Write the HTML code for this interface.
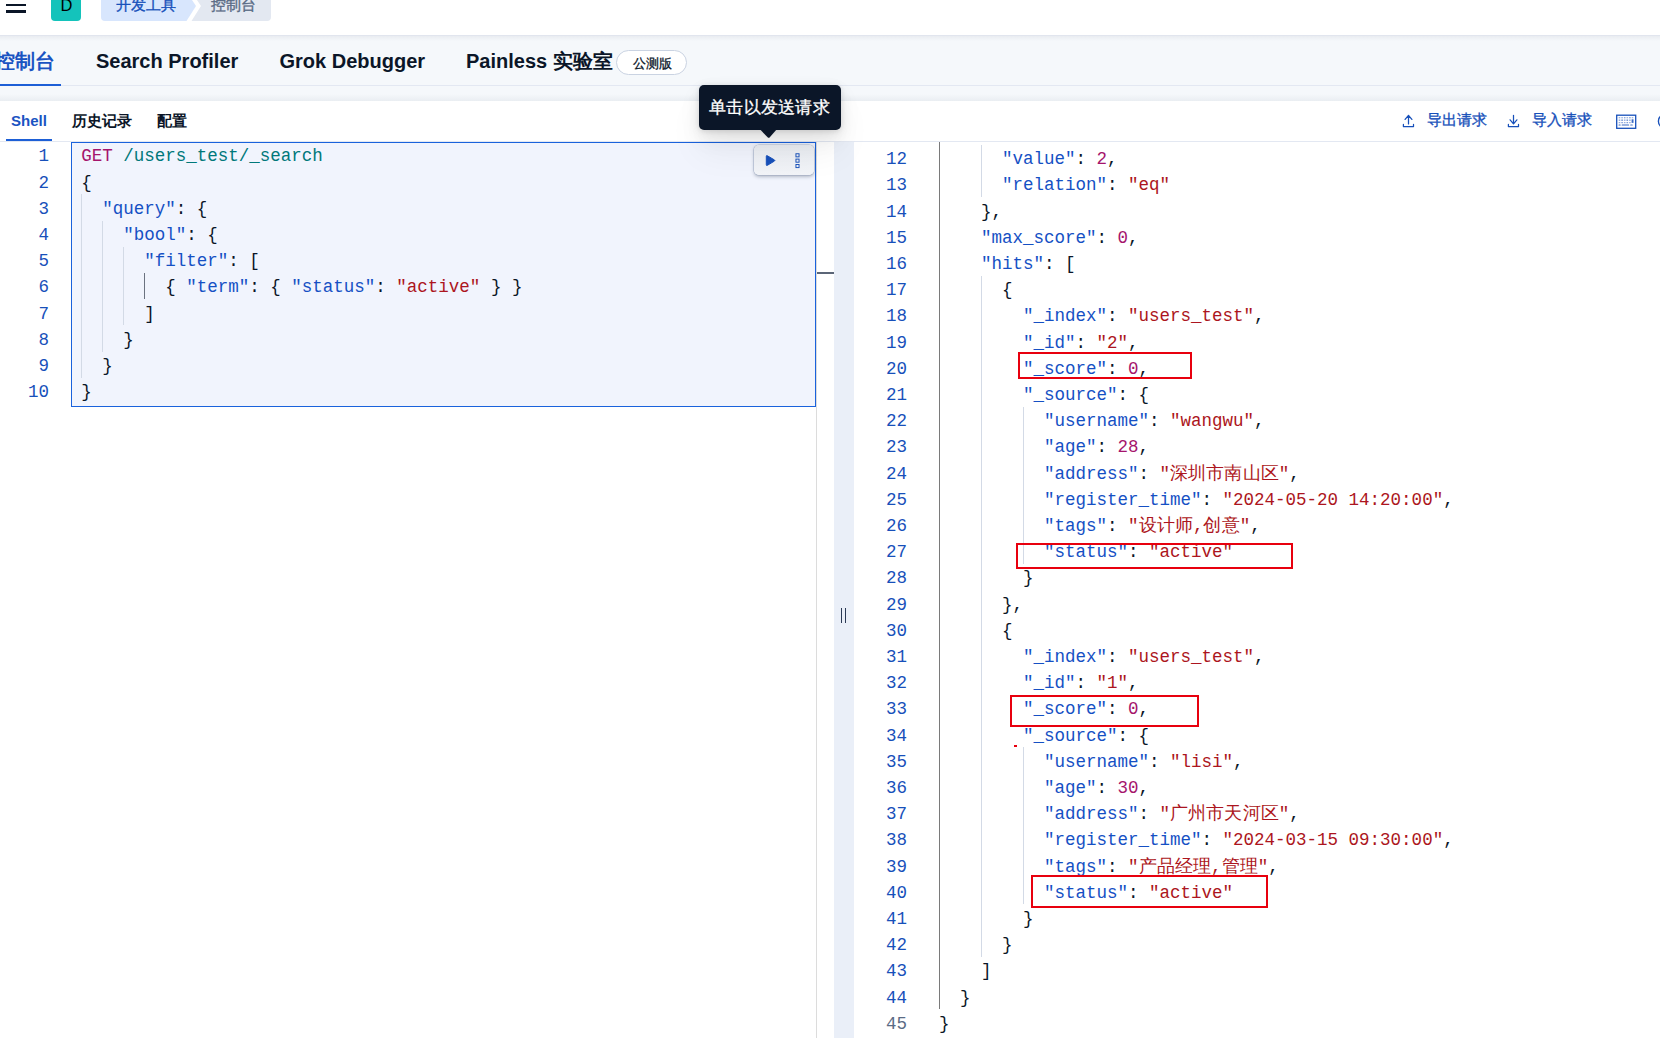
<!DOCTYPE html>
<html><head><meta charset="utf-8">
<style>
html,body{margin:0;padding:0;}
body{width:1660px;height:1038px;overflow:hidden;position:relative;background:#fff;font-family:"Liberation Sans",sans-serif;color:#0B1628;}
.abs{position:absolute;}
.ln{position:absolute;font-family:"Liberation Mono",monospace;font-size:17.5px;line-height:26.25px;height:26.25px;text-align:right;color:#1750BA;white-space:pre;}
.cl{position:absolute;font-family:"Liberation Mono",monospace;font-size:17.5px;line-height:26.25px;height:26.25px;white-space:pre;}
i.cj{font-style:normal;letter-spacing:0.1px;}
.t{position:absolute;white-space:nowrap;line-height:1;}
</style></head>
<body>
<!-- header -->
<div class="abs" style="left:0;top:0;width:1660px;height:35px;background:#fff;"></div>
<div class="abs" style="left:0;top:35px;width:1660px;height:66px;background:#F5F8FB;"></div>
<div class="abs" style="left:0;top:35px;width:1660px;height:1px;background:#E1E5EE;"></div>
<div class="abs" style="left:0;top:36px;width:1660px;height:5px;background:linear-gradient(#E9ECF1,#F5F8FB);"></div>
<!-- hamburger -->
<div class="abs" style="left:6px;top:3.6px;width:20px;height:2.6px;background:#0B1628;"></div>
<div class="abs" style="left:6px;top:10.2px;width:20px;height:2.6px;background:#0B1628;"></div>
<!-- D badge -->
<div class="abs" style="left:51px;top:-10px;width:30px;height:31px;background:#14C3BB;border-radius:4px;"></div>
<div class="t" style="left:60.5px;top:-3px;font-size:16.5px;color:#000;">D</div>
<!-- breadcrumbs -->
<svg class="abs" style="left:0;top:0" width="300" height="35">
  <path d="M101,-9 L186,-9 L196,6 L186.5,21 L105,21 Q101,21 101,17 Z" fill="#D8E6FD"/>
  <path d="M191,-9 L267,-9 Q271,-9 271,-5 L271,17 Q271,21 267,21 L191.5,21 L201,6 Z" fill="#E3E8F1"/>
</svg>
<div class="t" style="left:116px;top:-3px;font-size:15px;color:#1750BA;-webkit-text-stroke:0.35px #1750BA;">开发工具</div>
<div class="t" style="left:211px;top:-3px;font-size:15px;color:#5A6B85;-webkit-text-stroke:0.35px #5A6B85;">控制台</div>

<!-- big tabs -->
<div class="t" style="left:-5px;top:51px;font-size:20px;font-weight:bold;color:#1A54C2;">控制台</div>
<div class="t" style="left:96px;top:50.5px;font-size:20px;font-weight:bold;">Search Profiler</div>
<div class="t" style="left:279.5px;top:50.5px;font-size:20px;font-weight:bold;">Grok Debugger</div>
<div class="t" style="left:466px;top:50.5px;font-size:20px;font-weight:bold;">Painless 实验室</div>
<div class="abs" style="left:616px;top:50px;width:71px;height:25px;box-sizing:border-box;border:1px solid #CAD3E2;border-radius:13px;background:#fff;"></div>
<div class="t" style="left:632.5px;top:57.5px;font-size:12.5px;-webkit-text-stroke:0.3px #0B1628;">公测版</div>
<div class="abs" style="left:0;top:85px;width:1660px;height:1px;background:#E3E8F2;"></div>
<div class="abs" style="left:0;top:83.5px;width:61px;height:2.5px;background:#1D5FD6;"></div>
<div class="abs" style="left:0;top:94px;width:1660px;height:7px;background:linear-gradient(#F5F8FB,#EAEEF2);"></div>

<!-- small tabs -->
<div class="t" style="left:11px;top:113px;font-size:15px;font-weight:bold;color:#1A54C2;">Shell</div>
<div class="t" style="left:71.5px;top:112.5px;font-size:15px;font-weight:bold;">历史记录</div>
<div class="t" style="left:156.5px;top:112.5px;font-size:15px;font-weight:bold;">配置</div>
<div class="abs" style="left:0;top:141px;width:1660px;height:1px;background:#E3E8F2;"></div>
<div class="abs" style="left:6px;top:138.7px;width:46px;height:2.4px;background:#1D5FD6;"></div>

<!-- right actions -->
<svg class="abs" style="left:1395px;top:108px" width="30" height="25" fill="none" stroke="#1750BA" stroke-width="1.25" stroke-linecap="round" stroke-linejoin="round">
  <path d="M13.5,7.5 L13.5,15.9 M10.1,11.4 L13.5,7.3 L16.9,11.4 M8.4,16.4 L8.4,18.5 L18.5,18.5 L18.5,16.4"/>
</svg>
<div class="t" style="left:1426.5px;top:113.3px;font-size:14.6px;color:#1750BA;-webkit-text-stroke:0.35px #1750BA;">导出请求</div>
<svg class="abs" style="left:1500px;top:108px" width="30" height="25" fill="none" stroke="#1750BA" stroke-width="1.25" stroke-linecap="round" stroke-linejoin="round">
  <path d="M13.5,7.3 L13.5,15.7 M10.1,11.8 L13.5,15.9 L16.9,11.8 M8.4,16.4 L8.4,18.5 L18.5,18.5 L18.5,16.4"/>
</svg>
<div class="t" style="left:1531.5px;top:113.3px;font-size:14.6px;color:#1750BA;-webkit-text-stroke:0.35px #1750BA;">导入请求</div>
<svg class="abs" style="left:1610px;top:108px" width="50" height="25">
  <rect x="6.7" y="7.2" width="19" height="13.1" fill="none" stroke="#1750BA" stroke-width="1.3"/>
  <g fill="#1750BA">
    <rect x="8.7" y="9.2" width="1.6" height="1.1" opacity=".5"/><rect x="11.3" y="9.2" width="1.6" height="1.1" opacity=".5"/><rect x="13.9" y="9.2" width="1.6" height="1.1" opacity=".6"/><rect x="16.5" y="9.2" width="1.6" height="1.1" opacity=".5"/><rect x="19.1" y="9.2" width="1.6" height="1.1" opacity=".6"/><rect x="21.7" y="9.2" width="1.6" height="1.1" opacity=".5"/>
    <rect x="8.7" y="11.6" width="1.6" height="1.1" opacity=".6"/><rect x="11.3" y="11.6" width="1.6" height="1.1" opacity=".8"/><rect x="13.9" y="11.6" width="1.6" height="1.1" opacity=".6"/><rect x="16.5" y="11.6" width="1.6" height="1.1" opacity=".8"/><rect x="19.1" y="11.6" width="1.6" height="1.1" opacity=".6"/>
    <rect x="21.6" y="11.3" width="1.9" height="3.6" opacity=".85"/>
    <rect x="8.7" y="14.1" width="1.6" height="1.1" opacity=".5"/><rect x="11.3" y="14.1" width="1.6" height="1.1" opacity=".6"/><rect x="13.9" y="14.1" width="1.6" height="1.1" opacity=".5"/><rect x="16.5" y="14.1" width="1.6" height="1.1" opacity=".6"/><rect x="19.1" y="14.1" width="1.6" height="1.1" opacity=".5"/>
    <rect x="8.5" y="16.4" width="2.2" height="1.2" rx=".5" opacity=".85"/><rect x="11.6" y="16.4" width="7.6" height="1.2" rx=".5" opacity=".85"/><rect x="20.2" y="16.4" width="2.6" height="1.2" rx=".5" opacity=".8"/>
  </g>
  <path d="M53.6,7.1 A6.3,6.3 0 0 0 53.6,19.5" fill="none" stroke="#1750BA" stroke-width="1.4"/>
</svg>

<!-- left editor -->
<div class="abs" style="left:71px;top:142px;width:745px;height:265px;box-sizing:border-box;border:1.25px solid #1A62DC;background:#F1F4FD;"></div>
<!-- scrollbar border -->
<div class="abs" style="left:816.2px;top:142px;width:1px;height:896px;background:#DCDCDC;"></div>
<div class="abs" style="left:817px;top:272px;width:17px;height:1.8px;background:#5B6577;"></div>
<!-- resizer -->
<div class="abs" style="left:834px;top:142px;width:20px;height:896px;background:#EAEFF8;"></div>
<div class="abs" style="left:840.5px;top:608px;width:1.3px;height:15px;background:#2B3A55;"></div>
<div class="abs" style="left:845px;top:608px;width:1.3px;height:15px;background:#2B3A55;"></div>

<div style="position:absolute;left:81.00px;top:194.40px;width:1.10px;height:183.40px;background:#D3DAE6"></div>
<div style="position:absolute;left:102.00px;top:220.60px;width:1.10px;height:131.00px;background:#D3DAE6"></div>
<div style="position:absolute;left:123.20px;top:246.80px;width:1.10px;height:78.60px;background:#D3DAE6"></div>
<div style="position:absolute;left:144.00px;top:273.00px;width:1.30px;height:26.20px;background:#6B7280"></div>
<div style="position:absolute;left:938.70px;top:141.50px;width:1.30px;height:867.80px;background:#7A7A7A"></div>
<div style="position:absolute;left:981.00px;top:144.70px;width:1.10px;height:52.40px;background:#D3DAE6"></div>
<div style="position:absolute;left:981.00px;top:275.70px;width:1.10px;height:681.20px;background:#D3DAE6"></div>
<div style="position:absolute;left:1023.30px;top:406.70px;width:1.10px;height:157.20px;background:#D3DAE6"></div>
<div style="position:absolute;left:1023.30px;top:747.30px;width:1.10px;height:157.20px;background:#D3DAE6"></div>
<div class="ln" style="top:143.30px;left:0;width:49px">1</div>
<div class="cl" style="top:143.30px;left:81.20px"><span style="color:#A5146C">GET</span> <span style="color:#00787A">/users_test/_search</span></div>
<div class="ln" style="top:169.50px;left:0;width:49px">2</div>
<div class="cl" style="top:169.50px;left:81.20px"><span style="color:#0B1628">{</span></div>
<div class="ln" style="top:195.70px;left:0;width:49px">3</div>
<div class="cl" style="top:195.70px;left:81.20px">  <span style="color:#1550C4">&quot;query&quot;</span><span style="color:#0B1628">:</span> <span style="color:#0B1628">{</span></div>
<div class="ln" style="top:221.90px;left:0;width:49px">4</div>
<div class="cl" style="top:221.90px;left:81.20px">    <span style="color:#1550C4">&quot;bool&quot;</span><span style="color:#0B1628">:</span> <span style="color:#0B1628">{</span></div>
<div class="ln" style="top:248.10px;left:0;width:49px">5</div>
<div class="cl" style="top:248.10px;left:81.20px">      <span style="color:#1550C4">&quot;filter&quot;</span><span style="color:#0B1628">:</span> <span style="color:#0B1628">[</span></div>
<div class="ln" style="top:274.30px;left:0;width:49px">6</div>
<div class="cl" style="top:274.30px;left:81.20px">        <span style="color:#0B1628">{</span> <span style="color:#1550C4">&quot;term&quot;</span><span style="color:#0B1628">:</span> <span style="color:#0B1628">{</span> <span style="color:#1550C4">&quot;status&quot;</span><span style="color:#0B1628">:</span> <span style="color:#AC1520">&quot;active&quot;</span> <span style="color:#0B1628">}</span> <span style="color:#0B1628">}</span></div>
<div class="ln" style="top:300.50px;left:0;width:49px">7</div>
<div class="cl" style="top:300.50px;left:81.20px">      <span style="color:#0B1628">]</span></div>
<div class="ln" style="top:326.70px;left:0;width:49px">8</div>
<div class="cl" style="top:326.70px;left:81.20px">    <span style="color:#0B1628">}</span></div>
<div class="ln" style="top:352.90px;left:0;width:49px">9</div>
<div class="cl" style="top:352.90px;left:81.20px">  <span style="color:#0B1628">}</span></div>
<div class="ln" style="top:379.10px;left:0;width:49px">10</div>
<div class="cl" style="top:379.10px;left:81.20px"><span style="color:#0B1628">}</span></div>
<div class="ln" style="top:146.10px;left:854px;width:53px;color:#1750BA">12</div>
<div class="cl" style="top:146.10px;left:939.00px">      <span style="color:#1550C4">&quot;value&quot;</span><span style="color:#0B1628">:</span> <span style="color:#A5146C">2</span><span style="color:#0B1628">,</span></div>
<div class="ln" style="top:172.30px;left:854px;width:53px;color:#1750BA">13</div>
<div class="cl" style="top:172.30px;left:939.00px">      <span style="color:#1550C4">&quot;relation&quot;</span><span style="color:#0B1628">:</span> <span style="color:#AC1520">&quot;eq&quot;</span></div>
<div class="ln" style="top:198.50px;left:854px;width:53px;color:#1750BA">14</div>
<div class="cl" style="top:198.50px;left:939.00px">    <span style="color:#0B1628">}</span><span style="color:#0B1628">,</span></div>
<div class="ln" style="top:224.70px;left:854px;width:53px;color:#1750BA">15</div>
<div class="cl" style="top:224.70px;left:939.00px">    <span style="color:#1550C4">&quot;max_score&quot;</span><span style="color:#0B1628">:</span> <span style="color:#A5146C">0</span><span style="color:#0B1628">,</span></div>
<div class="ln" style="top:250.90px;left:854px;width:53px;color:#1750BA">16</div>
<div class="cl" style="top:250.90px;left:939.00px">    <span style="color:#1550C4">&quot;hits&quot;</span><span style="color:#0B1628">:</span> <span style="color:#0B1628">[</span></div>
<div class="ln" style="top:277.10px;left:854px;width:53px;color:#1750BA">17</div>
<div class="cl" style="top:277.10px;left:939.00px">      <span style="color:#0B1628">{</span></div>
<div class="ln" style="top:303.30px;left:854px;width:53px;color:#1750BA">18</div>
<div class="cl" style="top:303.30px;left:939.00px">        <span style="color:#1550C4">&quot;_index&quot;</span><span style="color:#0B1628">:</span> <span style="color:#AC1520">&quot;users_test&quot;</span><span style="color:#0B1628">,</span></div>
<div class="ln" style="top:329.50px;left:854px;width:53px;color:#1750BA">19</div>
<div class="cl" style="top:329.50px;left:939.00px">        <span style="color:#1550C4">&quot;_id&quot;</span><span style="color:#0B1628">:</span> <span style="color:#AC1520">&quot;2&quot;</span><span style="color:#0B1628">,</span></div>
<div class="ln" style="top:355.70px;left:854px;width:53px;color:#1750BA">20</div>
<div class="cl" style="top:355.70px;left:939.00px">        <span style="color:#1550C4">&quot;_score&quot;</span><span style="color:#0B1628">:</span> <span style="color:#A5146C">0</span><span style="color:#0B1628">,</span></div>
<div class="ln" style="top:381.90px;left:854px;width:53px;color:#1750BA">21</div>
<div class="cl" style="top:381.90px;left:939.00px">        <span style="color:#1550C4">&quot;_source&quot;</span><span style="color:#0B1628">:</span> <span style="color:#0B1628">{</span></div>
<div class="ln" style="top:408.10px;left:854px;width:53px;color:#1750BA">22</div>
<div class="cl" style="top:408.10px;left:939.00px">          <span style="color:#1550C4">&quot;username&quot;</span><span style="color:#0B1628">:</span> <span style="color:#AC1520">&quot;wangwu&quot;</span><span style="color:#0B1628">,</span></div>
<div class="ln" style="top:434.30px;left:854px;width:53px;color:#1750BA">23</div>
<div class="cl" style="top:434.30px;left:939.00px">          <span style="color:#1550C4">&quot;age&quot;</span><span style="color:#0B1628">:</span> <span style="color:#A5146C">28</span><span style="color:#0B1628">,</span></div>
<div class="ln" style="top:460.50px;left:854px;width:53px;color:#1750BA">24</div>
<div class="cl" style="top:460.50px;left:939.00px">          <span style="color:#1550C4">&quot;address&quot;</span><span style="color:#0B1628">:</span> <span style="color:#AC1520">&quot;<i class="cj">深</i><i class="cj">圳</i><i class="cj">市</i><i class="cj">南</i><i class="cj">山</i><i class="cj">区</i>&quot;</span><span style="color:#0B1628">,</span></div>
<div class="ln" style="top:486.70px;left:854px;width:53px;color:#1750BA">25</div>
<div class="cl" style="top:486.70px;left:939.00px">          <span style="color:#1550C4">&quot;register_time&quot;</span><span style="color:#0B1628">:</span> <span style="color:#AC1520">&quot;2024-05-20 14:20:00&quot;</span><span style="color:#0B1628">,</span></div>
<div class="ln" style="top:512.90px;left:854px;width:53px;color:#1750BA">26</div>
<div class="cl" style="top:512.90px;left:939.00px">          <span style="color:#1550C4">&quot;tags&quot;</span><span style="color:#0B1628">:</span> <span style="color:#AC1520">&quot;<i class="cj">设</i><i class="cj">计</i><i class="cj">师</i>,<i class="cj">创</i><i class="cj">意</i>&quot;</span><span style="color:#0B1628">,</span></div>
<div class="ln" style="top:539.10px;left:854px;width:53px;color:#1750BA">27</div>
<div class="cl" style="top:539.10px;left:939.00px">          <span style="color:#1550C4">&quot;status&quot;</span><span style="color:#0B1628">:</span> <span style="color:#AC1520">&quot;active&quot;</span></div>
<div class="ln" style="top:565.30px;left:854px;width:53px;color:#1750BA">28</div>
<div class="cl" style="top:565.30px;left:939.00px">        <span style="color:#0B1628">}</span></div>
<div class="ln" style="top:591.50px;left:854px;width:53px;color:#1750BA">29</div>
<div class="cl" style="top:591.50px;left:939.00px">      <span style="color:#0B1628">}</span><span style="color:#0B1628">,</span></div>
<div class="ln" style="top:617.70px;left:854px;width:53px;color:#1750BA">30</div>
<div class="cl" style="top:617.70px;left:939.00px">      <span style="color:#0B1628">{</span></div>
<div class="ln" style="top:643.90px;left:854px;width:53px;color:#1750BA">31</div>
<div class="cl" style="top:643.90px;left:939.00px">        <span style="color:#1550C4">&quot;_index&quot;</span><span style="color:#0B1628">:</span> <span style="color:#AC1520">&quot;users_test&quot;</span><span style="color:#0B1628">,</span></div>
<div class="ln" style="top:670.10px;left:854px;width:53px;color:#1750BA">32</div>
<div class="cl" style="top:670.10px;left:939.00px">        <span style="color:#1550C4">&quot;_id&quot;</span><span style="color:#0B1628">:</span> <span style="color:#AC1520">&quot;1&quot;</span><span style="color:#0B1628">,</span></div>
<div class="ln" style="top:696.30px;left:854px;width:53px;color:#1750BA">33</div>
<div class="cl" style="top:696.30px;left:939.00px">        <span style="color:#1550C4">&quot;_score&quot;</span><span style="color:#0B1628">:</span> <span style="color:#A5146C">0</span><span style="color:#0B1628">,</span></div>
<div class="ln" style="top:722.50px;left:854px;width:53px;color:#1750BA">34</div>
<div class="cl" style="top:722.50px;left:939.00px">        <span style="color:#1550C4">&quot;_source&quot;</span><span style="color:#0B1628">:</span> <span style="color:#0B1628">{</span></div>
<div class="ln" style="top:748.70px;left:854px;width:53px;color:#1750BA">35</div>
<div class="cl" style="top:748.70px;left:939.00px">          <span style="color:#1550C4">&quot;username&quot;</span><span style="color:#0B1628">:</span> <span style="color:#AC1520">&quot;lisi&quot;</span><span style="color:#0B1628">,</span></div>
<div class="ln" style="top:774.90px;left:854px;width:53px;color:#1750BA">36</div>
<div class="cl" style="top:774.90px;left:939.00px">          <span style="color:#1550C4">&quot;age&quot;</span><span style="color:#0B1628">:</span> <span style="color:#A5146C">30</span><span style="color:#0B1628">,</span></div>
<div class="ln" style="top:801.10px;left:854px;width:53px;color:#1750BA">37</div>
<div class="cl" style="top:801.10px;left:939.00px">          <span style="color:#1550C4">&quot;address&quot;</span><span style="color:#0B1628">:</span> <span style="color:#AC1520">&quot;<i class="cj">广</i><i class="cj">州</i><i class="cj">市</i><i class="cj">天</i><i class="cj">河</i><i class="cj">区</i>&quot;</span><span style="color:#0B1628">,</span></div>
<div class="ln" style="top:827.30px;left:854px;width:53px;color:#1750BA">38</div>
<div class="cl" style="top:827.30px;left:939.00px">          <span style="color:#1550C4">&quot;register_time&quot;</span><span style="color:#0B1628">:</span> <span style="color:#AC1520">&quot;2024-03-15 09:30:00&quot;</span><span style="color:#0B1628">,</span></div>
<div class="ln" style="top:853.50px;left:854px;width:53px;color:#1750BA">39</div>
<div class="cl" style="top:853.50px;left:939.00px">          <span style="color:#1550C4">&quot;tags&quot;</span><span style="color:#0B1628">:</span> <span style="color:#AC1520">&quot;<i class="cj">产</i><i class="cj">品</i><i class="cj">经</i><i class="cj">理</i>,<i class="cj">管</i><i class="cj">理</i>&quot;</span><span style="color:#0B1628">,</span></div>
<div class="ln" style="top:879.70px;left:854px;width:53px;color:#1750BA">40</div>
<div class="cl" style="top:879.70px;left:939.00px">          <span style="color:#1550C4">&quot;status&quot;</span><span style="color:#0B1628">:</span> <span style="color:#AC1520">&quot;active&quot;</span></div>
<div class="ln" style="top:905.90px;left:854px;width:53px;color:#1750BA">41</div>
<div class="cl" style="top:905.90px;left:939.00px">        <span style="color:#0B1628">}</span></div>
<div class="ln" style="top:932.10px;left:854px;width:53px;color:#1750BA">42</div>
<div class="cl" style="top:932.10px;left:939.00px">      <span style="color:#0B1628">}</span></div>
<div class="ln" style="top:958.30px;left:854px;width:53px;color:#1750BA">43</div>
<div class="cl" style="top:958.30px;left:939.00px">    <span style="color:#0B1628">]</span></div>
<div class="ln" style="top:984.50px;left:854px;width:53px;color:#1750BA">44</div>
<div class="cl" style="top:984.50px;left:939.00px">  <span style="color:#0B1628">}</span></div>
<div class="ln" style="top:1010.70px;left:854px;width:53px;color:#5A6B85">45</div>
<div class="cl" style="top:1010.70px;left:939.00px"><span style="color:#0B1628">}</span></div>

<!-- action pill -->
<div class="abs" style="left:754px;top:145px;width:60px;height:30px;border-radius:5px;background:linear-gradient(#EAEDF2,#F2F4F8);box-shadow:0 0 0 0.6px rgba(120,140,175,.45),0 1.5px 3.5px rgba(43,57,79,.3);"></div>
<svg class="abs" style="left:754px;top:145px" width="60" height="30">
  <path d="M12.3,11.4 Q12.3,10.2 13.4,10.8 L20.4,14.9 Q21.3,15.5 20.4,16.1 L13.4,20.3 Q12.3,20.9 12.3,19.7 Z" fill="#1750BA" stroke="#1750BA" stroke-width="1" stroke-linejoin="round"/>
  <g fill="none" stroke="#1750BA" stroke-width="0.95">
    <rect x="41.95" y="8.75" width="3.1" height="3.1"/>
    <rect x="41.95" y="14.1" width="3.1" height="3.1"/>
    <rect x="41.95" y="19.5" width="3.1" height="3.1"/>
  </g>
</svg>

<!-- tooltip -->
<div class="abs" style="left:699px;top:85px;width:142px;height:45px;border-radius:5px;background:#0B1628;box-shadow:0 1px 5px rgba(0,0,0,.1),0 3.6px 13px rgba(0,0,0,.07),0 8.4px 23px rgba(0,0,0,.06),0 23px 35px rgba(0,0,0,.05);"></div>
<svg class="abs" style="left:755px;top:129px" width="28" height="10"><path d="M4.7,0 L22,0 L14.8,8.2 Q13.7,9.2 12.6,8.2 Z" fill="#0B1628"/></svg>
<div class="t" style="left:709px;top:99.3px;font-size:17.3px;letter-spacing:0.3px;color:#fff;-webkit-text-stroke:0.3px #fff;">单击以发送请求</div>

<div style="position:absolute;left:1018.0px;top:352.0px;width:174.0px;height:27.0px;border:2px solid #E8000E;box-sizing:border-box"></div>
<div style="position:absolute;left:1016.0px;top:542.5px;width:277.0px;height:26.5px;border:2px solid #E8000E;box-sizing:border-box"></div>
<div style="position:absolute;left:1010.0px;top:695.0px;width:189.0px;height:32.0px;border:2px solid #E8000E;box-sizing:border-box"></div>
<div style="position:absolute;left:1031.0px;top:874.5px;width:237.0px;height:33.0px;border:2px solid #E8000E;box-sizing:border-box"></div>
<div class="abs" style="left:1013.5px;top:745px;width:3px;height:1.6px;background:#E8000E;"></div>
</body></html>
